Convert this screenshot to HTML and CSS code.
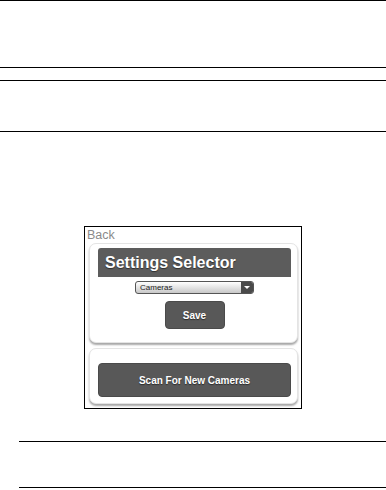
FILE: index.html
```html
<!DOCTYPE html>
<html lang="en">
<head>
    <meta charset="UTF-8">
    <meta name="viewport" content="width=device-width, initial-scale=1.0">
    <title>Settings Selector</title>
    <link rel="stylesheet" href="styles.css">
</head>
<body>
    <div class="rule rule-top"></div>
    <div class="rule rule-a"></div>
    <div class="rule rule-b"></div>
    <div class="rule rule-c"></div>

    <div class="shot">
        <a class="back" href="#">Back</a>

        <div class="card">
            <div class="card-head">Settings Selector</div>
            <div class="select">
                <span>Cameras</span>
                <span class="select-arrow"></span>
            </div>
            <button class="btn btn-save">Save</button>
        </div>

        <div class="card card-scan">
            <button class="btn btn-wide">Scan For New Cameras</button>
        </div>
    </div>

    <div class="rule rule-d"></div>
    <div class="rule rule-e"></div>
</body>
</html>
```

FILE: styles.css
```css
* {
    margin: 0;
    padding: 0;
    box-sizing: border-box;
}
body {
    font-family: 'Liberation Sans', Arial, sans-serif;
    background: #fff;
    color: #333;
    width: 386px;
    height: 490px;
    overflow: hidden;
}
.rule {
    border-top: 1px solid #000;
}
.rule-a {
    margin-top: 66px;
}
.rule-b {
    margin-top: 12px;
}
.rule-c {
    margin-top: 50px;
}
.rule-d {
    margin: 32px 0 0 19px;
}
.rule-e {
    margin: 45px 0 0 19px;
}

/* phone screenshot */
.shot {
    margin: 94px 0 0 84px;
    width: 218px;
    border: 1px solid #000;
    padding: 1px 3px 4px 4px;
    background: #fff;
}
.back {
    display: block;
    color: #8a8a8a;
    font-size: 12.5px;
    line-height: 14px;
    text-decoration: none;
    margin-left: -2px;
}
.card {
    background: #fff;
    border: 1px solid #e4e4e4;
    border-radius: 7px;
    box-shadow: 0 2px 2px rgba(0, 0, 0, 0.35);
    padding: 4px 6px 13px 8px;
    display: flex;
    flex-direction: column;
    align-items: center;
    margin-top: 1px;
}
.card-head {
    align-self: stretch;
    background: #5c5c5c;
    color: #fff;
    font-size: 16px;
    font-weight: bold;
    line-height: 29px;
    padding-left: 7px;
    border-radius: 3px 3px 0 0;
    text-shadow: 0 1px 1px rgba(0, 0, 0, 0.5);
}
.select {
    margin-top: 4px;
    width: 119px;
    height: 13px;
    border: 1px solid #555;
    border-radius: 3px;
    background: linear-gradient(#fff, #c8c8c8);
    display: flex;
    justify-content: space-between;
    align-items: center;
    font-size: 8px;
    color: #222;
    padding-left: 4px;
    overflow: hidden;
}
.select-arrow {
    width: 12px;
    height: 13px;
    background: #4a4a4a;
    position: relative;
}
.select-arrow::after {
    content: "";
    position: absolute;
    left: 3px;
    top: 5px;
    border-left: 3px solid transparent;
    border-right: 3px solid transparent;
    border-top: 3px solid #fff;
}
.btn {
    background: #585858;
    color: #fff;
    font-family: 'Liberation Sans', Arial, sans-serif;
    font-weight: bold;
    font-size: 10px;
    border: 1px solid #4a4a4a;
    border-radius: 4px;
    text-shadow: 0 1px 1px rgba(0, 0, 0, 0.5);
}
.btn-save {
    margin-top: 7px;
    width: 60px;
    height: 28px;
}
.card-scan {
    margin-top: 5px;
    padding: 14px 6px 6px 8px;
}
.btn-wide {
    align-self: stretch;
    height: 34px;
}
```
